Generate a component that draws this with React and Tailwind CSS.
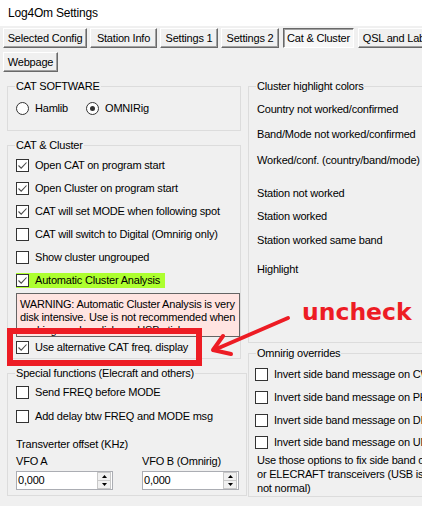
import React from "react";

function Check({ checked }) {
  return (
    <span className="w-[13px] h-[13px] shrink-0 border border-[#333333] bg-white flex items-center justify-center">
      {checked && (
        <svg width="11" height="11" viewBox="0 0 11 11">
          <path d="M1.5 5.5 L4.2 8.2 L9.5 2.5" fill="none" stroke="#4a4a4a" strokeWidth="1.1" />
        </svg>
      )}
    </span>
  );
}

function CheckRow({ checked, label, h = "h-[23px]", highlight }) {
  return (
    <div className={`${h} flex items-center`}>
      <div className={`flex items-center gap-[6px] h-[15px] ${highlight ? "bg-[#adff2f] pr-[5px]" : ""}`}>
        <Check checked={checked} />
        <span className="whitespace-nowrap">{label}</span>
      </div>
    </div>
  );
}

function Radio({ checked, label }) {
  return (
    <div className="flex items-center gap-[6px]">
      <span className="w-[13px] h-[13px] rounded-full border border-[#333333] bg-white flex items-center justify-center">
        {checked && <span className="w-[5px] h-[5px] rounded-full bg-[#333333]" />}
      </span>
      <span>{label}</span>
    </div>
  );
}

function Tab({ w, label, selected }) {
  return selected ? (
    <div
      className={`${w} h-[20px] flex items-center justify-center border-t border-l border-[#696969] border-r border-b border-r-white border-b-white bg-[#f7f7f7] shadow-[inset_1px_1px_0_#a0a0a0] whitespace-nowrap shrink-0`}
    >
      {label}
    </div>
  ) : (
    <div
      className={`${w} h-[20px] flex items-center justify-center border-t border-l border-white border-r border-b border-r-[#696969] border-b-[#696969] bg-[#f0f0f0] shadow-[inset_-1px_-1px_0_#a0a0a0] whitespace-nowrap shrink-0`}
    >
      {label}
    </div>
  );
}

function Spin({ value }) {
  return (
    <div className="w-[97px] h-[19px] border border-[#abadb3] bg-white flex items-center pl-[1px]">
      <span className="flex-1">{value}</span>
      <div className="w-[14px] h-[17px] flex flex-col mr-[1px]">
        <div className="flex-1 bg-[#f0f0f0] border border-[#c8c8c8] flex items-center justify-center">
          <svg width="5" height="3" viewBox="0 0 5 3"><path d="M0 3 L2.5 0 L5 3 Z" fill="#000" /></svg>
        </div>
        <div className="flex-1 bg-[#f0f0f0] border border-t-0 border-[#c8c8c8] flex items-center justify-center">
          <svg width="5" height="3" viewBox="0 0 5 3"><path d="M0 0 L2.5 3 L5 0 Z" fill="#000" /></svg>
        </div>
      </div>
    </div>
  );
}

function Group({ title, className, children }) {
  return (
    <fieldset className={`border border-[#dcdcdc] pl-[7px] pr-[7px] ${className}`}>
      <legend className="px-[1px] leading-[13px]">{title}</legend>
      {children}
    </fieldset>
  );
}

export default function App() {
  return (
    <div className="relative w-[422px] h-[506px] overflow-hidden bg-[#f0f0f0] text-black text-[11px] leading-[13px] font-['Liberation_Sans',Arial,sans-serif] tracking-[-0.2px]">
      {/* title */}
      <div className="h-[26px] bg-white flex items-center pl-[8px] text-[12px]">Log4Om Settings</div>

      {/* tabs */}
      <div className="pt-[2px] pl-[3px] flex flex-col gap-[4px]">
        <div className="flex">
          <Tab w="w-[84px]" label="Selected Config" />
          <div className="w-[3px] shrink-0" />
          <Tab w="w-[67px]" label="Station Info" />
          <div className="w-[3px] shrink-0" />
          <Tab w="w-[58px]" label="Settings 1" />
          <div className="w-[3px] shrink-0" />
          <Tab w="w-[58px]" label="Settings 2" />
          <div className="w-[4px] shrink-0" />
          <Tab w="w-[71px]" label="Cat & Cluster" selected />
          <div className="w-[4px] shrink-0" />
          <Tab w="w-[80px]" label="QSL and Label" />
        </div>
        <div className="flex">
          <Tab w="w-[55px]" label="Webpage" />
        </div>
      </div>

      {/* content */}
      <div className="flex pt-[8px] pl-[7px] gap-[7px]">
        {/* left column */}
        <div className="w-[234px] shrink-0 flex flex-col gap-[8px]">
          <Group title="CAT SOFTWARE" className="h-[51px]">
            <div className="mt-[7px] pl-[1px] flex items-center gap-[18px] h-[16px]">
              <Radio label="Hamlib" />
              <Radio label="OMNIRig" checked />
            </div>
          </Group>

          <Group title="CAT & Cluster" className="h-[220px] !pr-0">
            <div className="mt-[2px] pl-[1px]">
              <CheckRow checked label="Open CAT on program start" />
              <CheckRow checked label="Open Cluster on program start" />
              <CheckRow checked label="CAT will set MODE when following spot" />
              <CheckRow label="CAT will switch to Digital (Omnirig only)" />
              <CheckRow label="Show cluster ungrouped" />
              <CheckRow checked label="Automatic Cluster Analysis" highlight />
              <div className="mt-[1px] h-[44px] border border-[#646464] bg-[#ffe4e1] pl-[3px] pt-[4px] overflow-hidden leading-[13px]">
                WARNING: Automatic Cluster Analysis is very disk intensive. Use is not recommended when working on slow disks or USB sticks
              </div>
              <CheckRow checked label="Use alternative CAT freq. display" h="h-[20px]" />
            </div>
          </Group>

          <Group title="Special functions (Elecraft and others)" className="h-[129px]">
            <div className="pl-[1px]">
              <CheckRow label="Send FREQ before MODE" h="h-[24px]" />
              <CheckRow label="Add delay btw FREQ and MODE msg" h="h-[24px]" />
              <div className="mt-[10px]">Transverter offset (KHz)</div>
              <div className="mt-[4px] grid grid-cols-[126px_1fr]">
                <div className="flex flex-col gap-[3px]">
                  <span>VFO A</span>
                  <Spin value="0,000" />
                </div>
                <div className="flex flex-col gap-[3px]">
                  <span>VFO B (Omnirig)</span>
                  <Spin value="0,000" />
                </div>
              </div>
            </div>
          </Group>
        </div>

        {/* right column */}
        <div className="w-[220px] shrink-0 flex flex-col gap-[4px]">
          <Group title="Cluster highlight colors" className="h-[263px]">
            <div className="pl-[1px] whitespace-nowrap">
              <div className="mt-[10px]">Country not worked/confirmed</div>
              <div className="mt-[12px]">Band/Mode not worked/confirmed</div>
              <div className="mt-[13px]">Worked/conf. (country/band/mode)</div>
              <div className="mt-[20px]">Station not worked</div>
              <div className="mt-[10px]">Station worked</div>
              <div className="mt-[11px]">Station worked same band</div>
              <div className="mt-[16px]">Highlight</div>
            </div>
          </Group>

          <Group title="Omnirig overrides" className="h-[150px]">
            <div className="ml-[-1px] mt-[3px] whitespace-nowrap">
              <CheckRow label="Invert side band message on CW" />
              <CheckRow label="Invert side band message on PHONE" />
              <CheckRow label="Invert side band message on DIGI" />
              <CheckRow label="Invert side band message on UNKNOWN" h="h-[21px]" />
              <div className="leading-[14px] pl-[2px]">
                <div>Use those options to fix side band on KENWOOD</div>
                <div>or ELECRAFT transceivers (USB is reported as LSB)</div>
                <div>not normal)</div>
              </div>
            </div>
          </Group>
        </div>
      </div>

      {/* annotations */}
      <div className="absolute left-[7px] top-[328px] w-[195px] h-[38px] border-[6px] border-[#ed1c24] pointer-events-none" />
      <svg className="absolute left-0 top-0 pointer-events-none" width="422" height="506" viewBox="0 0 422 506">
        <path d="M288 318 L214 350" stroke="#ed1c24" strokeWidth="4" strokeLinecap="round" fill="none" />
        <path d="M223 336 L213 350 L231 354" stroke="#ed1c24" strokeWidth="4" strokeLinecap="round" strokeLinejoin="round" fill="none" />
      </svg>
      <div className="absolute left-[302px] top-[298px] text-[23.5px] leading-[28px] font-bold text-[#ed1c24] font-['DejaVu_Sans',sans-serif] tracking-normal">
        uncheck
      </div>
    </div>
  );
}
